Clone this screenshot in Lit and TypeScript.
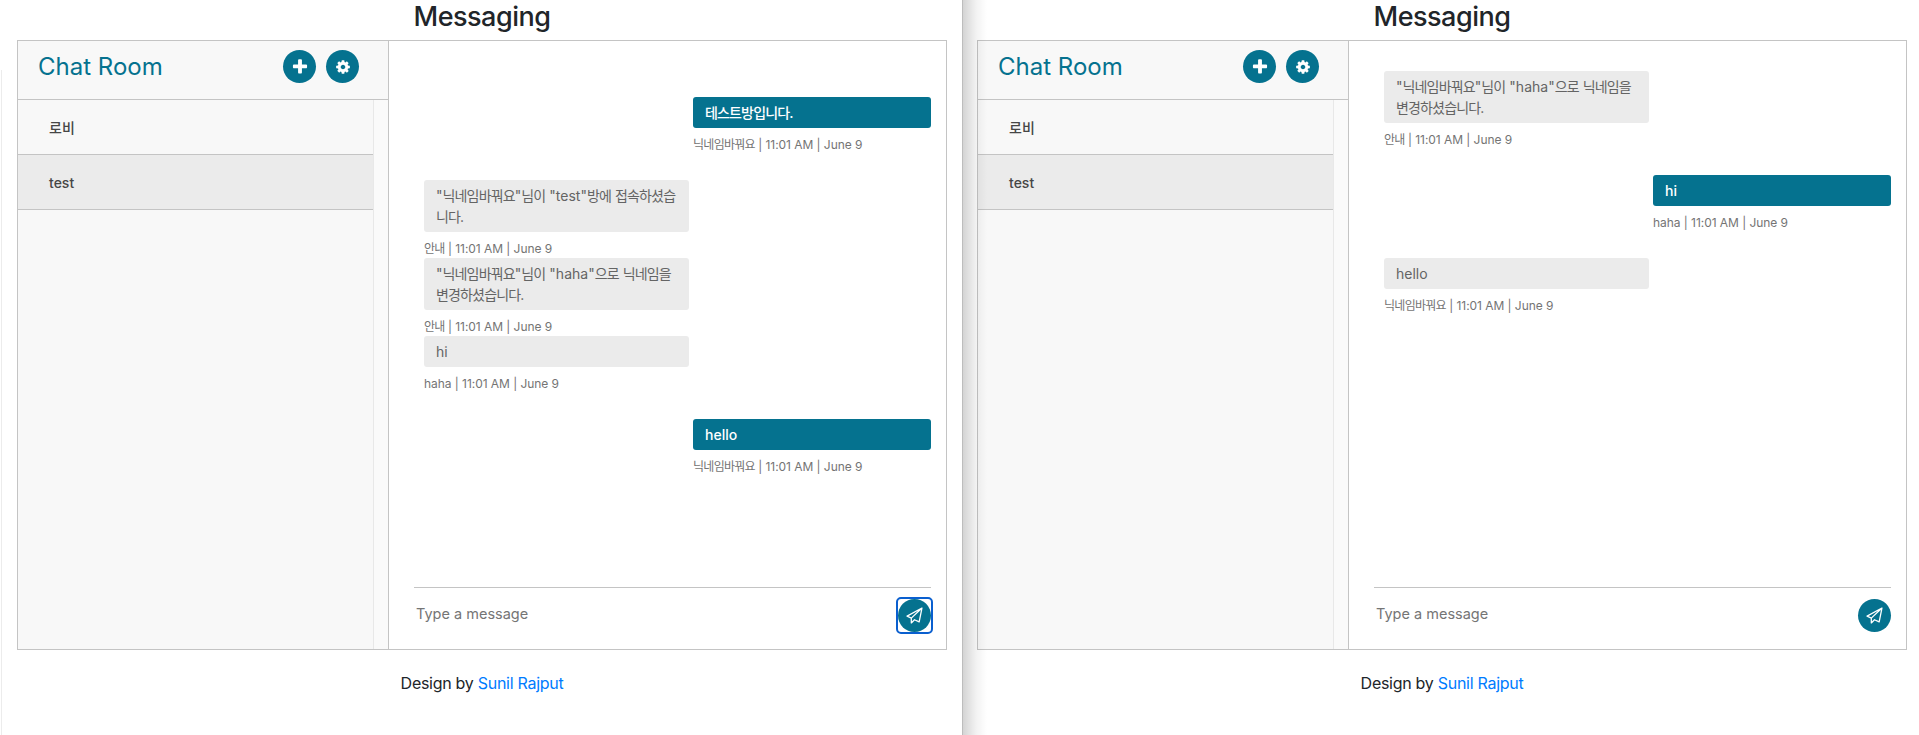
import { LitElement, html, css } from 'lit';
import { customElement } from 'lit/decorators.js';

const plusPath = 'M1600 736v192q0 40-28 68t-68 28h-416v416q0 40-28 68t-68 28h-192q-40 0-68-28t-28-68v-416h-416q-40 0-68-28t-28-68v-192q0-40 28-68t68-28h416v-416q0-40 28-68t68-28h192q40 0 68 28t28 68v416h416q40 0 68 28t28 68z';
const cogPath = 'M1152 896q0-106-75-181t-181-75-181 75-75 181 75 181 181 75 181-75 75-181zm512-109v222q0 12-8 23t-20 13l-185 28q-19 54-39 91 35 50 107 138 10 12 10 25t-9 23q-27 37-99 108t-94 71q-12 0-26-9l-138-108q-44 23-91 38-16 136-29 186-7 28-36 28h-222q-14 0-24.5-8.5t-11.5-21.5l-28-184q-49-16-90-37l-141 107q-10 9-25 9-14 0-25-11-126-114-165-168-7-10-7-23 0-12 8-23 15-21 51-66.5t54-70.5q-27-50-41-99l-183-27q-13-2-21-12.5t-8-23.5v-222q0-12 8-23t19-13l186-28q14-46 39-92-40-57-107-138-10-12-10-24 0-10 9-23 26-36 98.5-107.5t94.5-71.5q13 0 26 10l138 107q44-23 91-38 16-136 29-186 7-28 36-28h222q14 0 24.5 8.5t11.5 21.5l28 184q49 16 90 37l142-107q9-9 24-9 13 0 25 10 129 119 165 170 7 8 7 22 0 12-8 23-15 21-51 66.5t-54 70.5q26 50 41 98l183 28q13 2 21 12.5t8 23.5z';

type Msg = { out?: boolean; text: string; meta: string };

const NICK = '닉네임바꿔요';
const TIME = '11:01 AM | June 9';

const leftMsgs: Msg[] = [
  { out: true, text: '테스트방입니다.', meta: `${NICK} | ${TIME}` },
  { text: `"${NICK}"님이 "test"방에 접속하셨습니다.`, meta: `안내 | ${TIME}` },
  { text: `"${NICK}"님이 "haha"으로 닉네임을 변경하셨습니다.`, meta: `안내 | ${TIME}` },
  { text: 'hi', meta: `haha | ${TIME}` },
  { out: true, text: 'hello', meta: `${NICK} | ${TIME}` },
];

const rightMsgs: Msg[] = [
  { text: `"${NICK}"님이 "haha"으로 닉네임을 변경하셨습니다.`, meta: `안내 | ${TIME}` },
  { out: true, text: 'hi', meta: `haha | ${TIME}` },
  { text: 'hello', meta: `${NICK} | ${TIME}` },
];

// the hangul in the reference is set tighter than the latin next to it
const runs = (text: string) =>
  text.split(/([가-힣]+)/).map((part) =>
    /[가-힣]/.test(part) ? html`<span class="ko">${part}</span>` : part
  );

@customElement('app-root')
export class AppRoot extends LitElement {
  static styles = css`
    :host {
      display: block;
      height: 735px;
      overflow: hidden;
      background: #fff;
      font-family: Inter, 'Noto Sans CJK KR', sans-serif;
      color: #212529;
    }
    * {
      box-sizing: border-box;
    }
    .desktop {
      display: flex;
      height: 735px;
    }
    .window {
      flex: none;
      width: 959px;
      height: 735px;
      padding-left: 17px;
      background: #fff;
    }
    .window.front {
      width: 960px;
      position: relative;
      z-index: 1;
    }
    /* shadow the front window drops on the one behind it */
    .window.front::after {
      content: '';
      position: absolute;
      top: 0;
      bottom: 0;
      left: calc(100% + 2px);
      width: 24px;
      border-left: 1px solid #bdbdbd;
      background: linear-gradient(to right, rgba(0, 0, 0, 0.17), rgba(0, 0, 0, 0.05) 55%, rgba(0, 0, 0, 0));
    }
    .window.front::before {
      content: '';
      position: absolute;
      top: 70px;
      bottom: 0;
      left: 1px;
      width: 1px;
      background: #ececec;
    }
    .container {
      width: 930px;
    }
    h3 {
      margin: 0;
      height: 40px;
      font-size: 27px;
      font-weight: 500;
      line-height: 33px;
      letter-spacing: -0.5px;
      text-align: center;
    }
    .inbox {
      display: flex;
      height: 610px;
      border: 1px solid #c4c4c4;
    }
    .sidebar {
      flex: none;
      width: 371px;
      display: flex;
      flex-direction: column;
      background: #f8f8f8;
      border-right: 1px solid #c4c4c4;
    }
    .heading {
      flex: none;
      height: 59px;
      display: flex;
      align-items: center;
      justify-content: space-between;
      padding: 0 29px 7px 20px;
      border-bottom: 1px solid #c4c4c4;
    }
    .heading h4 {
      margin: 0;
      font-size: 24px;
      font-weight: 400;
      color: #05728f;
    }
    .tools {
      display: flex;
      gap: 10px;
    }
    .round {
      width: 33px;
      height: 33px;
      border: 0;
      padding: 0;
      border-radius: 50%;
      background: #05728f;
      display: flex;
      align-items: center;
      justify-content: center;
      color: #fff;
    }
    .round svg {
      fill: currentColor;
    }
    .round svg.plane {
      fill: none;
      stroke: currentColor;
      stroke-width: 1.2;
      stroke-linejoin: round;
    }
    .rooms {
      flex: 1;
      display: flex;
    }
    .list {
      flex: 1;
    }
    .track {
      flex: none;
      width: 15px;
      background: #fafafa;
      border-left: 1px solid #e8e8e8;
    }
    .room {
      height: 55px;
      display: flex;
      align-items: center;
      padding-left: 31px;
      font-size: 14px;
      font-weight: 500;
      color: #464646;
      border-bottom: 1px solid #c4c4c4;
    }
    .room.active {
      background: #ebebeb;
    }
    .main {
      flex: 1;
      min-width: 0;
      padding: 30px 15px 0 25px;
    }
    .history {
      height: 516px;
      overflow: hidden;
    }
    .in {
      width: 265px;
      margin-left: 10px;
    }
    .out {
      width: 238px;
      margin: 26px 0 26px auto;
    }
    .bubble {
      padding: 5px 12px;
      border-radius: 3px;
      font-size: 14px;
      line-height: 21px;
    }
    .in .bubble {
      background: #ebebeb;
      color: #646464;
    }
    .out .bubble {
      background: #05728f;
      color: #fff;
      font-weight: 500;
    }
    .ko {
      letter-spacing: -0.06em;
    }
    .meta {
      display: block;
      margin-top: 8px;
      font-size: 12px;
      line-height: 18px;
      letter-spacing: -0.05px;
      color: #747474;
      white-space: nowrap;
    }
    .input-row {
      display: flex;
      align-items: flex-start;
      justify-content: space-between;
      height: 60px;
      border-top: 1px solid #c4c4c4;
      padding-top: 11px;
    }
    .placeholder {
      padding: 5px 2px 0;
      font-size: 14.5px;
      line-height: 20px;
      color: #757575;
    }
    .focus-box {
      display: block;
      border-radius: 3px;
    }
    .focus-box.on {
      outline: 2px solid #0a5fcf;
    }
    footer {
      margin-top: 23px;
      font-size: 16px;
      line-height: 20px;
      letter-spacing: -0.28px;
      text-align: center;
    }
    a {
      color: #007bff;
      text-decoration: none;
    }
  `;

  renderMsg(m: Msg) {
    return html`
      <div class=${m.out ? 'out' : 'in'}>
        <div class="bubble">${runs(m.text)}</div>
        <span class="meta">${runs(m.meta)}</span>
      </div>
    `;
  }

  renderWindow(msgs: Msg[], front: boolean) {
    return html`
      <section class="window ${front ? 'front' : ''}">
        <div class="container">
          <h3>Messaging</h3>
          <div class="inbox">
            <div class="sidebar">
              <div class="heading">
                <h4>Chat Room</h4>
                <div class="tools">
                  <button class="round">
                    <svg width="18" height="18" viewBox="0 0 1792 1792"><path d=${plusPath}></path></svg>
                  </button>
                  <button class="round">
                    <svg width="16" height="16" viewBox="0 0 1792 1792"><path d=${cogPath}></path></svg>
                  </button>
                </div>
              </div>
              <div class="rooms">
                <div class="list">
                  <div class="room">로비</div>
                  <div class="room active">test</div>
                </div>
                <div class="track"></div>
              </div>
            </div>
            <div class="main">
              <div class="history">${msgs.map((m) => this.renderMsg(m))}</div>
              <div class="input-row">
                <div class="placeholder">Type a message</div>
                <span class="focus-box ${front ? 'on' : ''}">
                  <button class="round">
                    <svg class="plane" width="17" height="17" viewBox="0 0 16 16">
                      <path d="M15 1 1 8.6l4 1.9L15 1 12.4 14 8 12l-3 3v-4.5"></path>
                    </svg>
                  </button>
                </span>
              </div>
            </div>
          </div>
          <footer>Design by <a href="#">Sunil Rajput</a></footer>
        </div>
      </section>
    `;
  }

  render() {
    return html`
      <div class="desktop">
        ${this.renderWindow(leftMsgs, true)}
        ${this.renderWindow(rightMsgs, false)}
      </div>
    `;
  }
}
